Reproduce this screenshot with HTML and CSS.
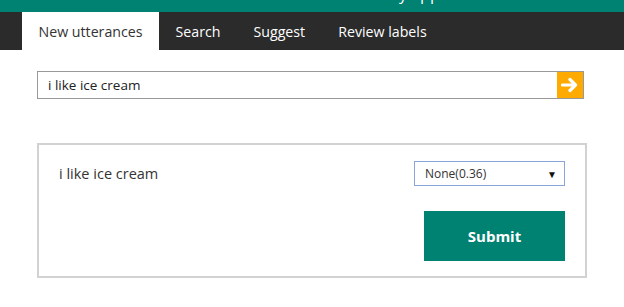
FILE: index.html
```html
<!DOCTYPE html>
<html lang="en">
<head>
    <meta charset="UTF-8">
    <meta name="viewport" content="width=device-width, initial-scale=1.0">
    <title>Label my app</title>
    <link rel="stylesheet" href="styles.css">
</head>
<body>
    <header class="topbar">
        <span class="app-title">Label my app</span>
    </header>
    <nav class="tabs">
        <a class="tab active" href="#">New utterances</a>
        <a class="tab" href="#">Search</a>
        <a class="tab" href="#">Suggest</a>
        <a class="tab" href="#">Review labels</a>
    </nav>

    <main class="content">
        <div class="search-row">
            <input class="search-input" type="text" value="i like ice cream">
            <button class="go-btn" aria-label="Go">
                <svg width="18" height="16" viewBox="0 0 18 16">
                    <path d="M1.5 8h13M9 2.5l5.5 5.5-5.5 5.5" fill="none" stroke="#fff" stroke-width="3.2" stroke-linecap="round" stroke-linejoin="round"/>
                </svg>
            </button>
        </div>

        <div class="card">
            <div class="card-row">
                <span class="utterance">i like ice cream</span>
                <div class="select-box">
                    <span>None(0.36)</span>
                    <span class="caret">&#9660;</span>
                </div>
            </div>
            <div class="card-actions">
                <button class="submit-btn">Submit</button>
            </div>
        </div>
    </main>
</body>
</html>
```

FILE: styles.css
```css
body {
    margin: 0;
    background: #fff;
    font-family: "Open Sans", "Noto Sans", sans-serif;
    color: #333;
}
.topbar {
    height: 12px;
    background: #008272;
    overflow: hidden;
    position: relative;
}
.app-title {
    position: absolute;
    left: 340px;
    top: -16px;
    color: #fff;
    font-size: 16px;
    line-height: 20px;
}
.tabs {
    display: flex;
    height: 38px;
    padding-left: 22px;
    background: #2b2b2b;
}
.tab {
    display: flex;
    align-items: center;
    padding: 0 16.5px;
    color: #fff;
    font-size: 14.2px;
    text-decoration: none;
}
.tab.active {
    background: #fff;
    color: #333;
}
.content {
    padding: 21px 37px 0;
}
.search-row {
    display: flex;
    width: 547px;
    height: 28px;
}
.search-input {
    flex: 1;
    margin: 0;
    padding: 0 10px;
    border: 1px solid #999;
    border-right: none;
    font-family: inherit;
    font-size: 13.5px;
    color: #222;
    outline: none;
}
.go-btn {
    width: 27px;
    height: 28px;
    padding: 0;
    border: 1px solid #999;
    border-left: none;
    background: #ffaa00;
    display: flex;
    align-items: center;
    justify-content: center;
}
.card {
    margin-top: 44px;
    width: 550px;
    border: 2px solid #d2d2d2;
    padding: 16px 20px 15px;
    box-sizing: border-box;
}
.card-row {
    display: flex;
    justify-content: space-between;
    align-items: center;
}
.utterance {
    font-size: 14.5px;
    color: #333;
}
.select-box {
    display: flex;
    justify-content: space-between;
    align-items: center;
    width: 151px;
    height: 25px;
    box-sizing: border-box;
    padding: 0 7px 0 10px;
    border: 1px solid #8aa6d6;
    font-size: 12px;
    color: #333;
}
.caret {
    font-size: 10px;
    color: #111;
}
.card-actions {
    display: flex;
    justify-content: flex-end;
    margin-top: 25px;
}
.submit-btn {
    width: 141px;
    height: 50px;
    border: none;
    background: #008272;
    color: #fff;
    font-family: inherit;
    font-size: 15px;
    font-weight: bold;
}
```
